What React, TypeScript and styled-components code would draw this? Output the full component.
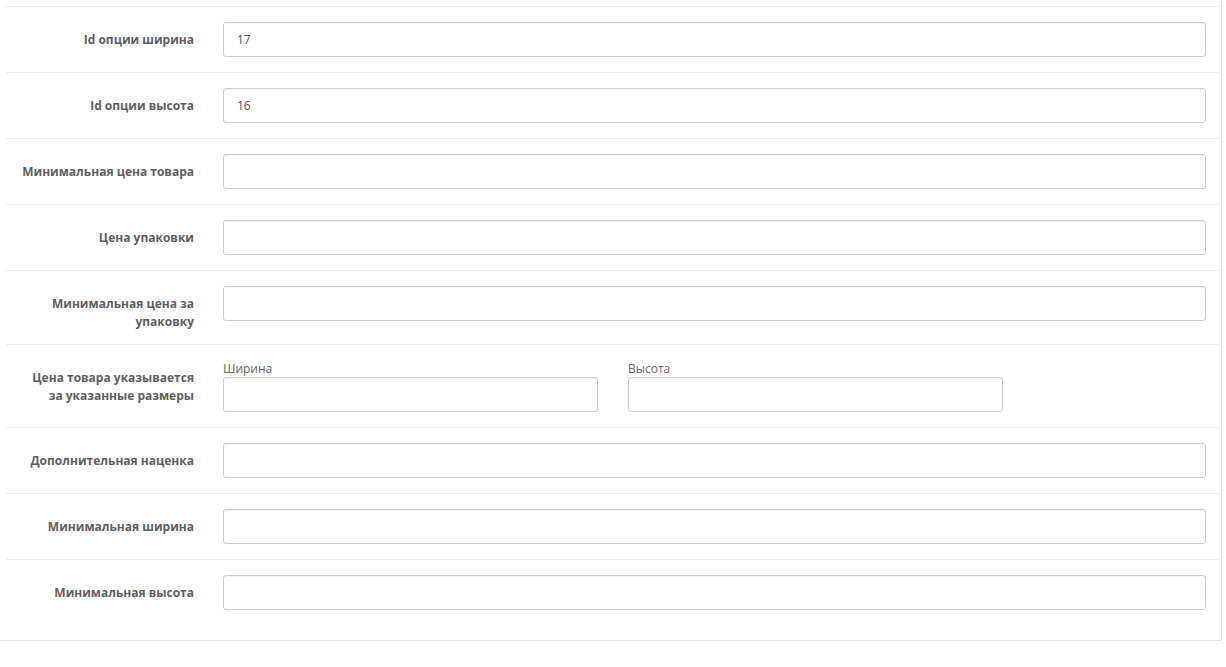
import styled, { createGlobalStyle } from 'styled-components'

const GlobalStyle = createGlobalStyle`
  html, body {
    margin: 0;
    padding: 0;
    background: #fff;
  }
  body {
    font-family: 'Open Sans', 'Liberation Sans', sans-serif;
    font-size: 12px;
    line-height: 18px;
    color: #666;
  }
`

const Page = styled.div`
  width: 1226px;
  height: 667px;
  overflow: hidden;
  background: #fff;
`

const Panel = styled.div`
  box-sizing: border-box;
  width: 1242px;
  margin: -10px 0 0 -20px;
  padding: 16px 0 15px 25px;
  border: 1px solid #e3e3e3;
  border-top: none;
  background: #fff;
`

const Form = styled.form`
  margin: 0;
`

const Row = styled.div`
  display: grid;
  grid-template-columns: 203px 1fr;
  border-top: 1px solid #ededed;
  padding: 15px 0;
`

const Label = styled.label`
  box-sizing: border-box;
  padding: 9px 15px 0 15px;
  margin-bottom: -2px;
  text-align: right;
  font-weight: 700;
  font-size: 12px;
  line-height: 18px;
  color: #5f5f5f;
`

const Field = styled.div`
  padding: 0 15px 0 14px;
`

const Input = styled.input`
  display: block;
  box-sizing: border-box;
  width: 100%;
  height: 35px;
  margin: 0;
  padding: 6px 13px;
  border: 1px solid #ccc;
  border-radius: 3px;
  background: #fff;
  font-family: 'Open Sans', 'Liberation Sans', sans-serif;
  font-size: 12px;
  color: #555;
  box-shadow: inset 0 1px 1px rgba(0, 0, 0, 0.04);
  outline: none;
`

const SizeGrid = styled.div`
  display: grid;
  grid-template-columns: 375px 375px;
  column-gap: 30px;
`

const SubLabel = styled.div`
  font-size: 12px;
  line-height: 17px;
  color: #666;
`

type TextRow = { label: string; value?: string }

const topRows: TextRow[] = [
  { label: 'Id опции ширина', value: '17' },
  { label: 'Id опции высота', value: '16' },
  { label: 'Минимальная цена товара' },
  { label: 'Цена упаковки' },
  { label: 'Минимальная цена за упаковку' },
]

const bottomRows: TextRow[] = [
  { label: 'Дополнительная наценка' },
  { label: 'Минимальная ширина' },
  { label: 'Минимальная высота' },
]

const TextField = ({ label, value }: TextRow) => (
  <Row>
    <Label>{label}</Label>
    <Field>
      <Input type="text" defaultValue={value ?? ''} />
    </Field>
  </Row>
)

const App = () => {
  return (
    <Page>
      <GlobalStyle />
      <Panel>
        <Form onSubmit={(e) => e.preventDefault()}>
          {topRows.map((r) => (
            <TextField key={r.label} {...r} />
          ))}
          <Row>
            <Label>Цена товара указывается за указанные размеры</Label>
            <Field>
              <SizeGrid>
                <div>
                  <SubLabel>Ширина</SubLabel>
                  <Input type="text" />
                </div>
                <div>
                  <SubLabel>Высота</SubLabel>
                  <Input type="text" />
                </div>
              </SizeGrid>
            </Field>
          </Row>
          {bottomRows.map((r) => (
            <TextField key={r.label} {...r} />
          ))}
        </Form>
      </Panel>
    </Page>
  )
}

export default App
